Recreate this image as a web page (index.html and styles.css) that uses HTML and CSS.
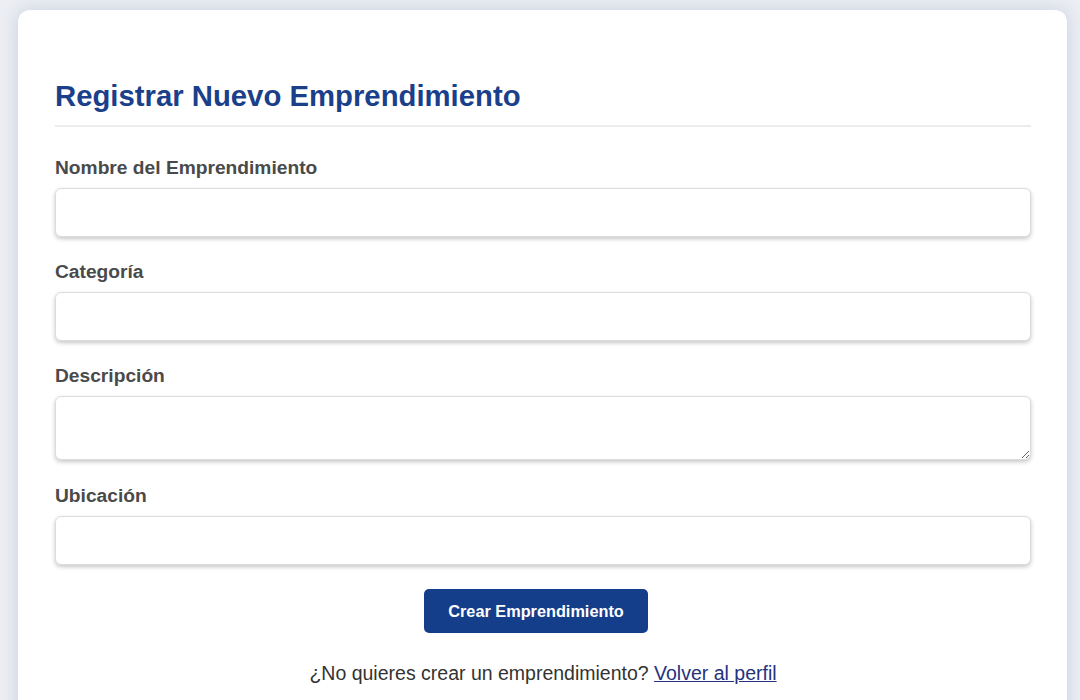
FILE: index.html
```html
<!DOCTYPE html>
<html lang="es">
<head>
<meta charset="utf-8">
<title>Registrar Nuevo Emprendimiento</title>
<link rel="stylesheet" href="styles.css">
</head>
<body>
<main class="card">
  <h2 class="title">Registrar Nuevo Emprendimiento</h2>
  <form class="form">
    <div class="group">
      <label class="label" for="nombre">Nombre del Emprendimiento</label>
      <input class="field" id="nombre" type="text">
    </div>
    <div class="group">
      <label class="label" for="categoria">Categoría</label>
      <input class="field" id="categoria" type="text">
    </div>
    <div class="group group-area">
      <label class="label" for="descripcion">Descripción</label>
      <textarea class="field area" id="descripcion"></textarea>
    </div>
    <div class="group">
      <label class="label" for="ubicacion">Ubicación</label>
      <input class="field" id="ubicacion" type="text">
    </div>
    <div class="actions">
      <button class="btn" type="button">Crear Emprendimiento</button>
    </div>
  </form>
  <p class="footer">¿No quieres crear un emprendimiento? <a class="link" href="#">Volver al perfil</a></p>
</main>
</body>
</html>
```

FILE: styles.css
```css
* { box-sizing: border-box; }

html, body {
  margin: 0;
  padding: 0;
  background: #eceef3;
  font-family: "Liberation Sans", Arial, sans-serif;
  overflow: hidden;
}

body {
  padding: 10px 13px 0 18px;
}

.card {
  background: #ffffff;
  border-radius: 12px;
  box-shadow: 0 0 18px rgba(40, 70, 140, 0.18);
  padding: 69px 36px 40px 37px;
  min-height: 760px;
}

.title {
  margin: 0 0 30px 0;
  font-size: 29.3px;
  line-height: 34px;
  font-weight: 700;
  color: #1b3f8a;
  padding-bottom: 12px;
  border-bottom: 2px solid #ececec;
}

.form {
  display: flex;
  flex-direction: column;
}

.group {
  display: flex;
  flex-direction: column;
  margin-bottom: 24px;
}

.group-area {
  margin-bottom: 25px;
}

.label {
  font-size: 19.2px;
  line-height: 22px;
  font-weight: 700;
  color: #4a4a4a;
  margin-bottom: 9px;
}

.field {
  width: 100%;
  height: 49px;
  border: 1px solid #dcdcdc;
  border-radius: 6px;
  background: #fff;
  box-shadow: 0 2px 4px rgba(0, 0, 0, 0.22);
  font-family: inherit;
  font-size: 16px;
  padding: 10px 12px;
}

.area {
  height: 64px;
  resize: vertical;
  display: block;
}

.actions {
  display: flex;
  justify-content: center;
  padding-right: 14px;
}

.btn {
  width: 224px;
  height: 44px;
  border: none;
  border-radius: 5px;
  background: #143d8a;
  color: #ffffff;
  font-family: inherit;
  font-size: 16.3px;
  font-weight: 700;
}

.footer {
  margin: 29px 0 0 0;
  text-align: center;
  font-size: 19.5px;
  line-height: 22px;
  color: #333333;
}

.link {
  color: #25327e;
  text-decoration: underline;
}
```
